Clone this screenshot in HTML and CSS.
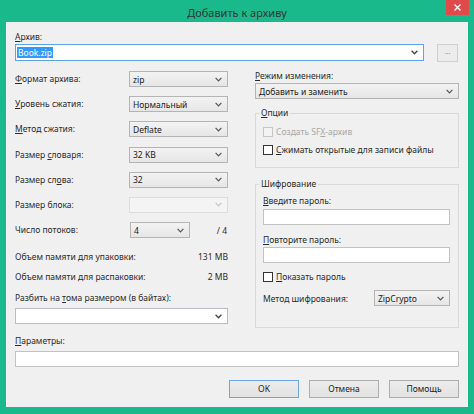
FILE: index.html
```html
<!DOCTYPE html>
<html lang="ru">
<head>
<meta charset="utf-8">
<title>Добавить к архиву</title>
<link rel="stylesheet" href="styles.css">
</head>
<body>
<div class="window">
  <div class="titlebar">
    <div class="title">Добавить к архиву</div>
    <div class="close"><svg width="7" height="7" viewBox="0 0 7 7"><path d="M0.5 0.5L6.5 6.5M6.5 0.5L0.5 6.5" stroke="#fff" stroke-width="1.4"/></svg></div>
  </div>
  <div class="client">
    <div class="lbl top-lbl"><u>А</u>рхив:</div>
    <div class="archive-row">
      <div class="combo edit focus"><span class="sel">Book.zip</span><svg class="chev" width="7" height="5" viewBox="0 0 7 5"><path d="M0.6 0.8L3.5 3.8L6.4 0.8" fill="none" stroke="#444" stroke-width="1.3"/></svg></div>
      <div class="browse">...</div>
    </div>
    <div class="columns">
      <div class="left">
        <div class="opts">
          <div class="lbl"><u>Ф</u>ормат архива:</div>
          <div class="combo"><span>zip</span><svg class="chev" width="7" height="5" viewBox="0 0 7 5"><path d="M0.6 0.8L3.5 3.8L6.4 0.8" fill="none" stroke="#555" stroke-width="1.2"/></svg></div>
          <div class="lbl"><u>У</u>ровень сжатия:</div>
          <div class="combo"><span>Нормальный</span><svg class="chev" width="7" height="5" viewBox="0 0 7 5"><path d="M0.6 0.8L3.5 3.8L6.4 0.8" fill="none" stroke="#555" stroke-width="1.2"/></svg></div>
          <div class="lbl"><u>М</u>етод сжатия:</div>
          <div class="combo"><span>Deflate</span><svg class="chev" width="7" height="5" viewBox="0 0 7 5"><path d="M0.6 0.8L3.5 3.8L6.4 0.8" fill="none" stroke="#555" stroke-width="1.2"/></svg></div>
          <div class="lbl">Размер <u>с</u>ловаря:</div>
          <div class="combo"><span>32 KB</span><svg class="chev" width="7" height="5" viewBox="0 0 7 5"><path d="M0.6 0.8L3.5 3.8L6.4 0.8" fill="none" stroke="#555" stroke-width="1.2"/></svg></div>
          <div class="lbl">Размер сл<u>о</u>ва:</div>
          <div class="combo"><span>32</span><svg class="chev" width="7" height="5" viewBox="0 0 7 5"><path d="M0.6 0.8L3.5 3.8L6.4 0.8" fill="none" stroke="#555" stroke-width="1.2"/></svg></div>
          <div class="lbl">Размер блока:</div>
          <div class="combo disabled"><span></span><svg class="chev" width="7" height="5" viewBox="0 0 7 5"><path d="M0.6 0.8L3.5 3.8L6.4 0.8" fill="none" stroke="#c4c4c4" stroke-width="1.2"/></svg></div>
          <div class="lbl">Число потоков:</div>
          <div class="threads">
            <div class="combo small"><span>4</span><svg class="chev" width="7" height="5" viewBox="0 0 7 5"><path d="M0.6 0.8L3.5 3.8L6.4 0.8" fill="none" stroke="#555" stroke-width="1.2"/></svg></div>
            <span class="of">/ 4</span>
          </div>
        </div>
        <div class="mem first"><span>Объем памяти для упаковки:</span><span>131 MB</span></div>
        <div class="mem"><span>Объем памяти для распаковки:</span><span>2 MB</span></div>
        <div class="lbl split-lbl">Разбить на <u>т</u>ома размером (в байтах):</div>
        <div class="combo edit split"><span></span><svg class="chev" width="7" height="5" viewBox="0 0 7 5"><path d="M0.6 0.8L3.5 3.8L6.4 0.8" fill="none" stroke="#444" stroke-width="1.3"/></svg></div>
      </div>
      <div class="right">
        <div class="lbl"><u>Р</u>ежим изменения:</div>
        <div class="combo mode"><span>Добавить и заменить</span><svg class="chev" width="7" height="5" viewBox="0 0 7 5"><path d="M0.6 0.8L3.5 3.8L6.4 0.8" fill="none" stroke="#555" stroke-width="1.2"/></svg></div>
        <fieldset class="group options">
          <legend><u>О</u>пции</legend>
          <div class="chk disabled first"><span class="box"></span><span>Создать SF<u>X</u>-архив</span></div>
          <div class="chk second"><span class="box"></span><span><u>С</u>жимать открытые для записи файлы</span></div>
        </fieldset>
        <fieldset class="group crypt">
          <legend>Шифрование</legend>
          <div class="lbl pw-lbl"><u>В</u>ведите пароль:</div>
          <div class="input pw"></div>
          <div class="lbl pw-lbl2"><u>П</u>овторите пароль:</div>
          <div class="input pw2"></div>
          <div class="chk show"><span class="box"></span><span><u>П</u>оказать пароль</span></div>
          <div class="method">
            <span>Метод шифрования:</span>
            <div class="combo crypto"><span>ZipCrypto</span><svg class="chev" width="7" height="5" viewBox="0 0 7 5"><path d="M0.6 0.8L3.5 3.8L6.4 0.8" fill="none" stroke="#555" stroke-width="1.2"/></svg></div>
          </div>
        </fieldset>
      </div>
    </div>
    <div class="lbl params-lbl"><u>П</u>араметры:</div>
    <div class="input params"></div>
    <div class="buttons">
      <div class="btn default">OK</div>
      <div class="btn">Отмена</div>
      <div class="btn">Помощь</div>
    </div>
  </div>
</div>
</body>
</html>
```

FILE: styles.css
```css
* { box-sizing: border-box; }
html, body { margin: 0; padding: 0; }
body {
  width: 474px;
  height: 414px;
  overflow: hidden;
  background: #19b98b;
  font-family: "Noto Sans", "Open Sans", sans-serif;
  font-size: 8.5px;
  color: #2b2b2b;
}
u { text-decoration: underline; text-underline-offset: 1px; }
.window {
  width: 474px;
  height: 414px;
  background: #19b98b;
  display: flex;
  flex-direction: column;
}
.titlebar {
  height: 22px;
  display: grid;
  grid-template-columns: 1fr auto 1fr;
  align-items: start;
}
.title {
  grid-column: 2;
  font-size: 11px;
  line-height: 14px;
  padding-top: 6px;
  color: #333333;
}
.close {
  grid-column: 3;
  justify-self: end;
  margin-right: 5px;
  width: 23px;
  height: 15px;
  background: #e04a4a;
  display: flex;
  align-items: center;
  justify-content: center;
}
.close svg { display: block; }
.client {
  flex: 1;
  margin: 0 6px 7px 6px;
  background: #f0f0f0;
  border-left: 1px solid #fbfbfb;
  padding: 9px 9px 9px 8px;
  display: flex;
  flex-direction: column;
}
.lbl { line-height: 12px; white-space: nowrap; }
.top-lbl { height: 12px; }
.archive-row {
  margin-top: 1px;
  height: 18px;
  display: flex;
  align-items: flex-start;
}
.archive-row .combo { flex: 1; height: 17px; }
.browse {
  width: 21px;
  height: 18px;
  margin-left: 13px;
  margin-right: 1px;
  border: 1px solid #cfcfcf;
  background: #ececec;
  color: #8a8a8a;
  font-size: 7px;
  line-height: 14px;
  text-align: center;
}
.combo {
  height: 16px;
  border: 1px solid #b4b4b4;
  background: linear-gradient(#f3f3f3, #e6e6e6);
  display: flex;
  align-items: center;
  justify-content: space-between;
  padding: 0 5px 0 3px;
  white-space: nowrap;
  color: #222;
}
.combo.edit { background: #fff; border-color: #b9bcc4; padding-left: 1px; }
.combo.focus { border-color: #5ea3e8; }
.combo.disabled { background: #f4f4f4; border-color: #dcdcdc; }
.chev { display: block; flex: none; }
.sel { background: #3399ff; color: #fff; padding: 0 1px; line-height: 11px; }
.columns {
  margin-top: 8px;
  height: 258px;
  display: grid;
  grid-template-columns: 213px 204px;
  column-gap: 27px;
}
.opts {
  padding-top: 1px;
  display: grid;
  grid-template-columns: 114px 99px;
  grid-auto-rows: 16px;
  row-gap: 9.2px;
}
.opts .lbl { align-self: center; }
.threads {
  display: flex;
  align-items: center;
  justify-content: space-between;
  padding-left: 1px;
}
.combo.small { width: 60px; }
.of { padding-right: 1px; }
.mem {
  display: flex;
  justify-content: space-between;
  line-height: 12px;
  margin-top: 8px;
}
.mem.first { margin-top: 13px; }
.split-lbl { margin-top: 9px; }
.combo.split { margin-top: 4px; }
.combo.mode { margin-top: 1px; }
.group {
  margin: 8px 0 0 0;
  padding: 0 8px 11px 7px;
  border: 1px solid #d9d9d9;
  min-width: 0;
}
.group legend {
  padding: 0 2px;
  margin-left: -4px;
  line-height: 12px;
}
.crypt { margin-top: 10px; padding-bottom: 21px; }
.chk {
  display: flex;
  align-items: center;
  gap: 3px;
  line-height: 12px;
  white-space: nowrap;
}
.chk .box {
  width: 10px;
  height: 10px;
  border: 1px solid #333;
  background: #fff;
  flex: none;
}
.chk.disabled { color: #a8a8a8; }
.chk.disabled .box { border-color: #c6c6c6; background: #f3f3f3; }
.chk.first { margin-top: 7px; }
.chk.second { margin-top: 6px; }
.pw-lbl { margin-top: 5px; }
.input {
  height: 16px;
  background: #fff;
  border: 1px solid #c3c3c3;
}
.input.pw { margin-top: 2px; }
.pw-lbl2 { margin-top: 9px; }
.input.pw2 { margin-top: 1px; }
.chk.show { margin-top: 8px; }
.method {
  margin-top: 7px;
  display: flex;
  align-items: center;
  justify-content: space-between;
  white-space: nowrap;
}
.combo.crypto { width: 76px; }
.params-lbl { margin-top: 7px; }
.input.params { margin-top: 4px; }
.buttons {
  margin-top: 13px;
  display: flex;
  justify-content: flex-end;
  gap: 10px;
}
.btn {
  width: 70px;
  height: 18px;
  border: 1px solid #adadad;
  background: linear-gradient(#ececec, #e2e2e2);
  text-align: center;
  line-height: 16px;
  color: #222;
}
.btn.default { border-color: #6aa7e0; }
```
